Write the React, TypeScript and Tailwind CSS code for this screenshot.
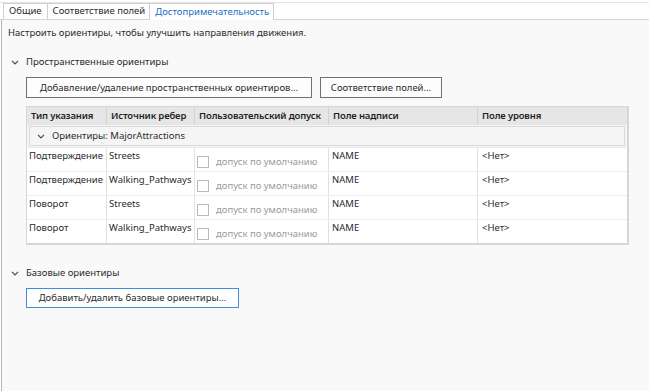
import React from 'react';

const Chevron = ({ className = '' }: { className?: string }) => (
  <svg width="8" height="5" viewBox="0 0 8 5" className={className}>
    <path d="M1 0.8 L4 3.8 L7 0.8" fill="none" stroke="#4a4a4a" strokeWidth="1.2" />
  </svg>
);

const rows = [
  { type: 'Подтверждение', source: 'Streets' },
  { type: 'Подтверждение', source: 'Walking_Pathways' },
  { type: 'Поворот', source: 'Streets' },
  { type: 'Поворот', source: 'Walking_Pathways' },
];

const cols = ['w-[80px]', 'w-[88px]', 'w-[134px]', 'w-[149px]', 'flex-1'];
const headers = ['Тип указания', 'Источник ребер', 'Пользовательский допуск', 'Поле надписи', 'Поле уровня'];

const App = () => {
  return (
    <div className="w-[649px] h-[391px] bg-white text-[9.5px] text-[#2b2b2b] overflow-hidden flex flex-col" style={{ fontFamily: '"Noto Sans", "Open Sans", sans-serif' }}>
      {/* Tabs */}
      <div className="h-[18px] flex items-end border-t border-[#e4e4e4] mt-[2px] border-b border-b-[#d6d6d6] pl-[3px] shrink-0">
        <div className="h-[16px] px-[5px] flex items-center border border-b-0 border-[#d0d0d0] bg-white">Общие</div>
        <div className="h-[16px] pl-[5px] pr-[4px] flex items-center border border-b-0 border-l-0 border-[#d0d0d0] bg-white">Соответствие полей</div>
        <div className="h-[17px] pl-[5px] pr-[4px] flex items-center border border-b-0 border-l-0 border-[#d0d0d0] bg-white text-[#1a6fc4] -mb-px">Достопримечательность</div>
      </div>

      {/* Panel */}
      <div className="flex-1 bg-[#f9f9f9] border-l border-[#b4b4b4] ml-px pl-[6px] pt-[6px]">
        <div className="leading-[14px]">Настроить ориентиры, чтобы улучшить направления движения.</div>

        <div className="flex items-center gap-[7px] mt-[15px] pl-[3px] leading-[14px]">
          <Chevron />
          <span>Пространственные ориентиры</span>
        </div>

        <div className="pl-[18px]">
          <div className="flex gap-[8px] mt-[8px]">
            <button className="h-[21px] w-[286px] border border-[#707070] bg-[#fdfdfd] text-center leading-[19px]">Добавление/удаление пространственных ориентиров...</button>
            <button className="h-[21px] w-[122px] border border-[#707070] bg-[#fdfdfd] text-center leading-[19px]">Соответствие полей...</button>
          </div>

          <div className="mt-[8px] w-[603px] border border-[#d6d6d6] border-b-2 border-r-2 bg-white">
            <div className="flex h-[18px] bg-[#e6e6e6] font-semibold text-[#1f1f1f] tracking-[-0.15px]">
              {headers.map((h, i) => (
                <div key={h} className={`${cols[i]} px-[4px] leading-[18px] whitespace-nowrap overflow-hidden ${i < 4 ? 'border-r border-[#d2d2d2]' : ''}`}>{h}</div>
              ))}
            </div>
            <div className="px-[2px] py-[1px] bg-[#f4f4f4]">
              <div className="h-[20px] border border-[#dadada] bg-[#f5f5f5] flex items-center gap-[7px] pl-[7px]">
                <Chevron />
                <span>Ориентиры: MajorAttractions</span>
              </div>
            </div>
            {rows.map((r, idx) => (
              <div key={idx} className="flex h-[24px] border-t border-[#ebebeb] leading-[14px]">
                <div className={`${cols[0]} pl-[2px] pt-[1px] whitespace-nowrap border-r border-[#e0e0e0]`}>{r.type}</div>
                <div className={`${cols[1]} pl-[2px] pt-[1px] whitespace-nowrap border-r border-[#e0e0e0]`}>{r.source}</div>
                <div className={`${cols[2]} pl-[2px] flex items-center gap-[7px] pt-[4px] whitespace-nowrap border-r border-[#e0e0e0]`}>
                  <span className="w-[12px] h-[12px] border border-[#b9b9b9] bg-white shrink-0" />
                  <span className="text-[#9a9a9a]">допуск по умолчанию</span>
                </div>
                <div className={`${cols[3]} pl-[3px] pt-[1px] border-r border-[#e0e0e0]`}>NAME</div>
                <div className={`${cols[4]} pl-[4px] pt-[1px]`}>&lt;Нет&gt;</div>
              </div>
            ))}
          </div>
        </div>

        <div className="flex items-center gap-[7px] mt-[21px] pl-[3px] leading-[14px]">
          <Chevron />
          <span>Базовые ориентиры</span>
        </div>
        <div className="pl-[18px] mt-[8px]">
          <button className="h-[20px] w-[213px] border border-[#3d8ee0] bg-white text-center leading-[18px]">Добавить/удалить базовые ориентиры...</button>
        </div>
      </div>
    </div>
  );
};

export default App;
